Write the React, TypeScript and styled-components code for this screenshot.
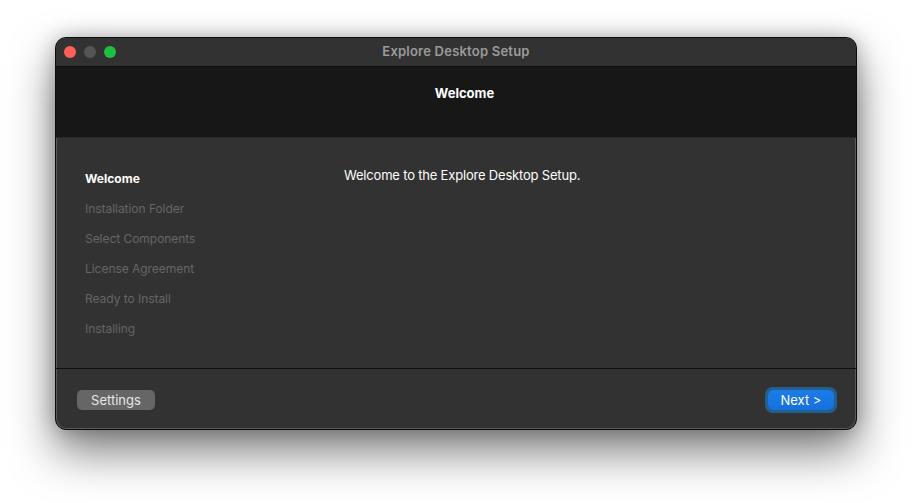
import React from 'react';
import styled, { createGlobalStyle } from 'styled-components';

const GlobalStyle = createGlobalStyle`
  html, body {
    margin: 0;
    padding: 0;
    height: 100%;
    background: #ffffff;
    overflow: hidden;
    font-family: Inter, "Liberation Sans", sans-serif;
  }
`;

const Page = styled.div`
  box-sizing: border-box;
  width: 912px;
  height: 503px;
  padding: 37px 55px 0 55px;
`;

const Window = styled.div`
  box-sizing: border-box;
  width: 802px;
  height: 393px;
  display: flex;
  flex-direction: column;
  background: #323232;
  border: 1px solid #0c0c0c;
  border-radius: 11px;
  overflow: hidden;
  box-shadow: inset 0 0 0 1px #5a5a5a, 0 22px 45px rgba(0, 0, 0, 0.5), 0 0 20px rgba(0, 0, 0, 0.25);
`;

const TitleBar = styled.div`
  position: relative;
  box-sizing: border-box;
  flex: 0 0 29px;
  display: flex;
  align-items: center;
  justify-content: center;
  padding-bottom: 3px;
  background: #333233;
  border-bottom: 1px solid #0e0e0e;
`;

const TrafficLights = styled.div`
  position: absolute;
  left: 8px;
  top: 8px;
  display: flex;
  gap: 8px;
`;

const Light = styled.span<{ $color: string }>`
  display: block;
  width: 12px;
  height: 12px;
  border-radius: 50%;
  background: ${(p) => p.$color};
`;

const WindowTitle = styled.div`
  font-size: 13px;
  font-weight: 600;
  letter-spacing: 0.22px;
  color: #9a9a9a;
`;

const Banner = styled.div`
  flex: 0 0 71px;
  display: flex;
  justify-content: center;
  padding: 18px 0 0 17px;
  box-sizing: border-box;
  background: #171717;
  border-bottom: 1px solid #282828;
`;

const BannerTitle = styled.div`
  font-size: 13px;
  line-height: 16px;
  font-weight: 700;
  color: #ffffff;
`;

const Body = styled.div`
  flex: 1;
  display: flex;
  min-height: 0;
`;

const Steps = styled.ul`
  flex: 0 0 288px;
  box-sizing: border-box;
  margin: 0;
  padding: 33px 0 0 29px;
  list-style: none;
  display: flex;
  flex-direction: column;
  gap: 14px;
`;

const Step = styled.li<{ $active?: boolean }>`
  font-size: 12px;
  line-height: 16px;
  letter-spacing: ${(p) => (p.$active ? '0' : '-0.04px')};
  font-weight: ${(p) => (p.$active ? 700 : 400)};
  color: ${(p) => (p.$active ? '#ffffff' : '#666666')};
`;

const Content = styled.div`
  flex: 1;
  padding-top: 29px;
  font-size: 13px;
  line-height: 16px;
  letter-spacing: -0.19px;
  color: #ffffff;
`;

const Footer = styled.div`
  flex: 0 0 61px;
  box-sizing: border-box;
  display: flex;
  align-items: center;
  justify-content: space-between;
  padding: 1px 22px 0 21px;
  border-top: 1px solid #111111;
`;

const Button = styled.button<{ $primary?: boolean }>`
  box-sizing: border-box;
  font-family: inherit;
  font-size: 13px;
  line-height: 16px;
  padding: 0;
  border: none;
  border-radius: 5px;
  height: 20px;
  width: ${(p) => (p.$primary ? '66px' : '78px')};
  color: ${(p) => (p.$primary ? '#ffffff' : '#e6e6e6')};
  background: ${(p) => (p.$primary ? 'linear-gradient(#1c7ce8, #1670dc)' : '#666666')};
  box-shadow: ${(p) => (p.$primary ? '0 0 0 3px #22618f' : 'none')};
`;

const steps = [
  'Welcome',
  'Installation Folder',
  'Select Components',
  'License Agreement',
  'Ready to Install',
  'Installing',
];

export default function App() {
  return (
    <Page>
      <GlobalStyle />
      <Window>
        <TitleBar>
          <TrafficLights>
            <Light $color="#fe5f57" />
            <Light $color="#565556" />
            <Light $color="#1fc03f" />
          </TrafficLights>
          <WindowTitle>Explore Desktop Setup</WindowTitle>
        </TitleBar>
        <Banner>
          <BannerTitle>Welcome</BannerTitle>
        </Banner>
        <Body>
          <Steps>
            {steps.map((s, i) => (
              <Step key={s} $active={i === 0}>{s}</Step>
            ))}
          </Steps>
          <Content>Welcome to the Explore Desktop Setup.</Content>
        </Body>
        <Footer>
          <Button>Settings</Button>
          <Button $primary>Next &gt;</Button>
        </Footer>
      </Window>
    </Page>
  );
}
